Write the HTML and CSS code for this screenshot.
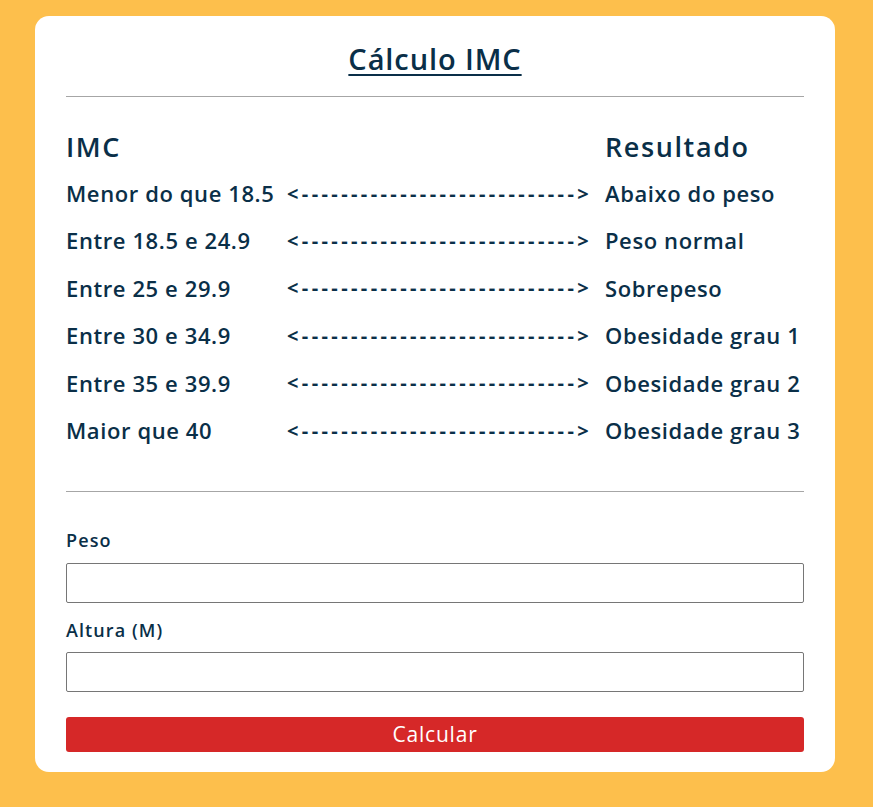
FILE: index.html
```html
<!DOCTYPE html>
<html lang="pt-BR">
<head>
<meta charset="utf-8">
<title>Cálculo IMC</title>
<link rel="stylesheet" href="styles.css">
</head>
<body>
<main class="card">
  <h1 class="title">Cálculo IMC</h1>
  <hr class="divider divider-top">
  <div class="table">
    <div class="th">IMC</div><div class="th"></div><div class="th">Resultado</div>
    <div class="td">Menor do que 18.5</div><div class="td arrow">&lt;----------------------------&gt;</div><div class="td">Abaixo do peso</div>
    <div class="td">Entre 18.5 e 24.9</div><div class="td arrow">&lt;----------------------------&gt;</div><div class="td">Peso normal</div>
    <div class="td">Entre 25 e 29.9</div><div class="td arrow">&lt;----------------------------&gt;</div><div class="td">Sobrepeso</div>
    <div class="td">Entre 30 e 34.9</div><div class="td arrow">&lt;----------------------------&gt;</div><div class="td">Obesidade grau 1</div>
    <div class="td">Entre 35 e 39.9</div><div class="td arrow">&lt;----------------------------&gt;</div><div class="td">Obesidade grau 2</div>
    <div class="td">Maior que 40</div><div class="td arrow">&lt;----------------------------&gt;</div><div class="td">Obesidade grau 3</div>
  </div>
  <hr class="divider divider-bottom">
  <form class="form">
    <label class="label label-peso" for="peso">Peso</label>
    <input class="input" id="peso" type="text">
    <label class="label label-altura" for="altura">Altura (M)</label>
    <input class="input" id="altura" type="text">
    <button class="btn" type="button">Calcular</button>
  </form>
</main>
</body>
</html>
```
FILE: styles.css
```css
* { box-sizing: border-box; }
html, body { margin: 0; padding: 0; }
body {
  background: #fdbf4c;
  font-family: "Open Sans", "Noto Sans", sans-serif;
  color: #0a2f48;
  min-height: 807px;
}
.card {
  width: 800px;
  margin: 16px 0 0 35px;
  background: #ffffff;
  border-radius: 14px;
  padding: 23px 31px 20px 31px;
}
.title {
  margin: 0;
  font-size: 29px;
  line-height: 40px;
  font-weight: 600;
  letter-spacing: 0.9px;
  text-align: center;
  text-decoration: underline;
  text-decoration-thickness: 2px;
  text-underline-offset: 4px;
}
.divider {
  border: 0;
  border-top: 1px solid #a6a6a6;
  margin: 0;
  height: 0;
}
.divider-top { margin-top: 17px; }
.table {
  margin-top: 25px;
  display: grid;
  grid-template-columns: 221px 318px 1fr;
  grid-auto-rows: 47.4px;
  font-weight: 600;
  font-size: 22px;
  letter-spacing: 0.6px;
}
.th {
  font-size: 27px;
  height: 48px;
  display: flex;
  align-items: center;
  letter-spacing: 1.6px;
}
.td {
  display: flex;
  align-items: center;
  white-space: nowrap;
}
.arrow { font-size: 20px; font-weight: 700; letter-spacing: 3.4px; }
.divider-bottom { margin-top: 37px; }
.form { display: flex; flex-direction: column; }
.label {
  font-size: 18px;
  font-weight: 600;
  line-height: 20px;
  letter-spacing: 1.1px;
}
.label-peso { margin-top: 38px; margin-bottom: 13px; }
.label-altura { margin-top: 17px; margin-bottom: 12px; }
.input {
  height: 40px;
  width: 100%;
  border: 1px solid #767676;
  border-radius: 2px;
  background: #fff;
  font-family: inherit;
  font-size: 16px;
}
.btn {
  margin-top: 25px;
  height: 35px;
  width: 100%;
  background: #d62828;
  color: #ffffff;
  border: 0;
  border-radius: 3px;
  font-family: inherit;
  font-size: 21px;
  font-weight: 400;
  letter-spacing: 0.8px;
}
```
